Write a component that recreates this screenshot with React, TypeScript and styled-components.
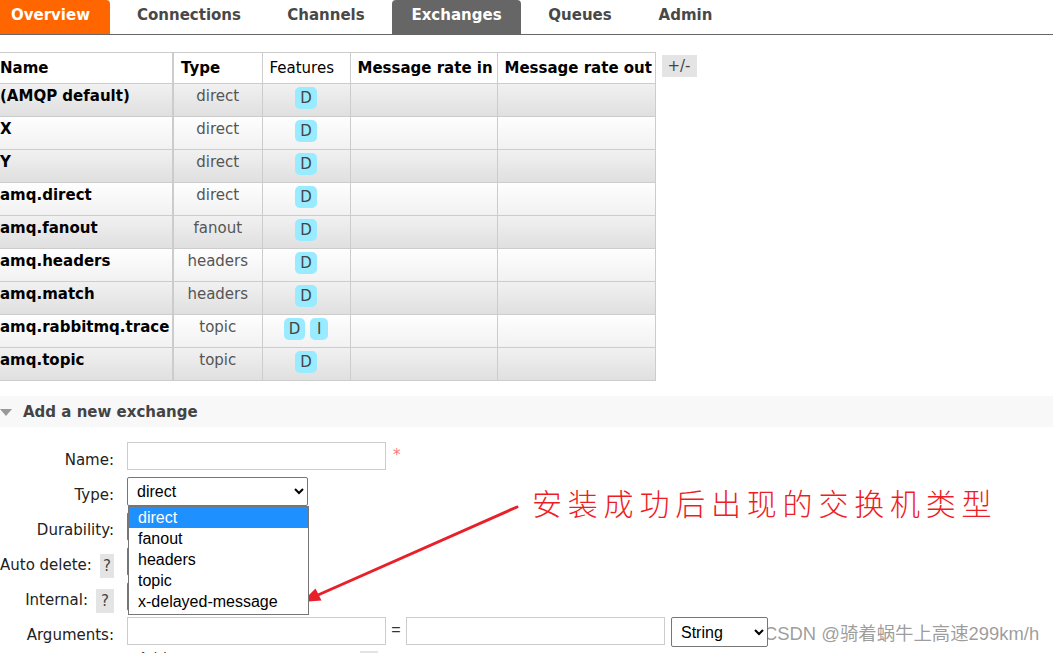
import React from "react";
import styled, { createGlobalStyle } from "styled-components";

const GlobalStyle = createGlobalStyle`
  html, body {
    margin: 0;
    padding: 0;
    background: #fff;
  }
  body {
    font-family: "DejaVu Sans", Verdana, sans-serif;
    font-size: 15px;
    color: #444;
    overflow: hidden;
  }
`;

interface IExchange {
  name: string;
  type: string;
  features: string[];
}

const exchanges: IExchange[] = [
  { name: "(AMQP default)", type: "direct", features: ["D"] },
  { name: "X", type: "direct", features: ["D"] },
  { name: "Y", type: "direct", features: ["D"] },
  { name: "amq.direct", type: "direct", features: ["D"] },
  { name: "amq.fanout", type: "fanout", features: ["D"] },
  { name: "amq.headers", type: "headers", features: ["D"] },
  { name: "amq.match", type: "headers", features: ["D"] },
  { name: "amq.rabbitmq.trace", type: "topic", features: ["D", "I"] },
  { name: "amq.topic", type: "topic", features: ["D"] },
];

const tabs = [
  { label: "Overview", width: 110, bg: "#f60" },
  { label: "Connections", width: 142 },
  { label: "Channels", width: 116 },
  { label: "Exchanges", width: 129, bg: "#666" },
  { label: "Queues", width: 102 },
  { label: "Admin", width: 93 },
];

const typeOptions = ["direct", "fanout", "headers", "topic", "x-delayed-message"];

const App: React.FC = () => {
  return (
    <Page>
      <GlobalStyle />
      <Nav>
        {tabs.map((t, i) => (
          <Tab key={t.label} $w={t.width} $bg={t.bg} $first={i === 0}>
            {t.label}
          </Tab>
        ))}
      </Nav>

      <TableArea>
        <Table>
          <colgroup>
            <col style={{ width: 173 }} />
            <col style={{ width: 89 }} />
            <col style={{ width: 88 }} />
            <col style={{ width: 147 }} />
            <col style={{ width: 158 }} />
          </colgroup>
          <thead>
            <HeadRow>
              <Th $first>Name</Th>
              <Th>Type</Th>
              <Th $normal>Features</Th>
              <Th>Message rate in</Th>
              <Th>Message rate out</Th>
            </HeadRow>
          </thead>
          <tbody>
            {exchanges.map((x, i) => (
              <Row key={x.name} $alt={i % 2 === 0}>
                <NameCell>{x.name}</NameCell>
                <TypeCell>{x.type}</TypeCell>
                <FeatureCell>
                  {x.features.map(f => (
                    <Badge key={f}>{f}</Badge>
                  ))}
                </FeatureCell>
                <Td />
                <Td />
              </Row>
            ))}
          </tbody>
        </Table>
        <ToggleButton>+/-</ToggleButton>
      </TableArea>

      <SectionHeader>
        <Triangle />
        Add a new exchange
      </SectionHeader>

      <Form>
        <FormRow>
          <Label>Name:</Label>
          <Field>
            <TextInput $w={259} />
            <Required>*</Required>
          </Field>
        </FormRow>
        <FormRow $top>
          <Label>Type:</Label>
          <Field>
            <SelectWrap>
              <Select $w={181} $h={29} defaultValue="direct">
                {typeOptions.map(o => (
                  <option key={o}>{o}</option>
                ))}
              </Select>
              <Popup>
                {typeOptions.map((o, i) => (
                  <PopupOption key={o} $selected={i === 0}>
                    {o}
                  </PopupOption>
                ))}
              </Popup>
            </SelectWrap>
          </Field>
        </FormRow>
        <FormRow>
          <Label>Durability:</Label>
          <Field>
            <Select $w={110} $h={29} defaultValue="Durable">
              <option>Durable</option>
              <option>Transient</option>
            </Select>
          </Field>
        </FormRow>
        <FormRow>
          <Label>
            Auto delete:<Help>?</Help>
          </Label>
          <Field>
            <Select $w={70} $h={29} defaultValue="No">
              <option>No</option>
              <option>Yes</option>
            </Select>
          </Field>
        </FormRow>
        <FormRow>
          <Label>
            Internal:<Help>?</Help>
          </Label>
          <Field>
            <Select $w={70} $h={29} defaultValue="No">
              <option>No</option>
              <option>Yes</option>
            </Select>
          </Field>
        </FormRow>
        <FormRow>
          <Label>Arguments:</Label>
          <Field>
            <TextInput $w={259} />
            <Equals>=</Equals>
            <TextInput $w={259} />
            <Select $w={97} $h={30} $ml={6} defaultValue="String">
              <option>String</option>
              <option>Number</option>
              <option>Boolean</option>
              <option>List</option>
            </Select>
          </Field>
        </FormRow>
        <FormRow>
          <span />
          <AddLine>
            Add<Help $inline>?</Help>
          </AddLine>
        </FormRow>
      </Form>

      <Annotation>安装成功后出现的交换机类型</Annotation>
      <ArrowLayer width="1053" height="653" viewBox="0 0 1053 653">
        <line x1="517" y1="507" x2="318" y2="595" stroke="#e8202a" strokeWidth="3" strokeLinecap="round" />
        <polygon points="302,602 321.5,600.5 315.5,588.5" fill="#e8202a" />
      </ArrowLayer>
      <Watermark>CSDN @骑着蜗牛上高速299km/h</Watermark>
    </Page>
  );
};

const Page = styled.div`
  position: relative;
  width: 1053px;
  height: 653px;
  overflow: hidden;
`;

const Nav = styled.nav`
  display: flex;
  gap: 8px;
  height: 34px;
  border-bottom: 1px solid #666;
`;

const Tab = styled.div<{ $w: number; $bg?: string; $first?: boolean }>`
  box-sizing: border-box;
  flex: none;
  width: ${p => p.$w}px;
  height: 34px;
  line-height: 30px;
  text-align: center;
  font-weight: bold;
  font-size: 15px;
  color: ${p => (p.$bg ? "#fff" : "#484848")};
  background: ${p => p.$bg || "transparent"};
  border-radius: ${p => (p.$first ? "0 4px 0 0" : "4px 4px 0 0")};
  padding-right: ${p => (p.$first ? 9 : 0)}px;
`;

const TableArea = styled.div`
  display: flex;
  align-items: flex-start;
  margin-top: 17px;
`;

const Table = styled.table`
  border-collapse: collapse;
  table-layout: fixed;
  width: 655px;
  font-size: 15px;
`;

const HeadRow = styled.tr`
  height: 31px;
  background: #fff;
`;

const Th = styled.th<{ $first?: boolean; $normal?: boolean }>`
  text-align: left;
  padding: 0 ${p => (p.$first ? "0" : "7px")};
  font-weight: ${p => (p.$normal ? "normal" : "bold")};
  color: #000;
  white-space: nowrap;
  border: 1px solid #ccc;
  ${p => (p.$first ? "border-left: none; border-right: 2px solid #ccc;" : "")}
`;

const Row = styled.tr<{ $alt?: boolean }>`
  height: 33px;
  background: ${p =>
    p.$alt
      ? "linear-gradient(to bottom, #f1f1f1, #dfdfdf)"
      : "linear-gradient(to bottom, #fefefe, #f1f1f1)"};
`;

const Td = styled.td`
  border: 1px solid #ccc;
  vertical-align: top;
  padding: 2px 8px 0;
  line-height: 20px;
  white-space: nowrap;
`;

const NameCell = styled(Td)`
  border-left: none;
  border-right: 2px solid #ccc;
  padding-left: 0;
  font-weight: bold;
  color: #000;
`;

const TypeCell = styled(Td)`
  text-align: center;
  color: #555;
`;

const FeatureCell = styled(Td)`
  text-align: center;
  padding-top: 3px;
`;

const Badge = styled.span`
  display: inline-block;
  box-sizing: border-box;
  min-width: 18px;
  height: 22px;
  line-height: 22px;
  padding: 0 5px;
  margin: 0 2.5px;
  border-radius: 5px;
  background: #99ebff;
  color: #444;
  text-align: center;
  vertical-align: top;
`;

const ToggleButton = styled.div`
  margin: 3px 0 0 6px;
  width: 35px;
  height: 22px;
  line-height: 22px;
  text-align: center;
  background: #e4e4e4;
  color: #444;
`;

const SectionHeader = styled.div`
  display: flex;
  align-items: center;
  gap: 11px;
  margin-top: 15px;
  height: 31px;
  background: #f8f8f8;
  font-weight: bold;
  color: #444;
`;

const Triangle = styled.span`
  width: 0;
  height: 0;
  border-left: 6px solid transparent;
  border-right: 6px solid transparent;
  border-top: 7px solid #999;
  margin-top: 1px;
`;

const Form = styled.div`
  display: flex;
  flex-direction: column;
  margin-top: 12px;
`;

const FormRow = styled.div<{ $top?: boolean }>`
  position: relative;
  z-index: ${p => (p.$top ? 2 : 1)};
  display: grid;
  grid-template-columns: 114px 1fr;
  column-gap: 13px;
  height: 35px;
`;

const Label = styled.div`
  display: flex;
  justify-content: flex-end;
  align-items: flex-start;
  gap: 8px;
  padding-top: 12px;
  line-height: 18px;
  color: #222;
  white-space: nowrap;
`;

const Help = styled.span<{ $inline?: boolean }>`
  display: inline-block;
  width: 18px;
  height: 24px;
  line-height: 24px;
  margin-top: ${p => (p.$inline ? 2 : -2)}px;
  text-align: center;
  background: #e4e4e4;
  color: #444;
`;

const Field = styled.div`
  display: flex;
  align-items: flex-start;
  padding-top: 3px;
`;

const TextInput = styled.input<{ $w: number }>`
  box-sizing: border-box;
  width: ${p => p.$w}px;
  height: 28px;
  border: 1px solid #ccc;
  padding: 0 4px;
  outline: none;
`;

const Required = styled.span`
  margin: 4px 0 0 7px;
  color: #f77;
  font-size: 15px;
`;

const Equals = styled.span`
  width: 20px;
  text-align: center;
  line-height: 26px;
  font-family: "Liberation Sans", Arial, sans-serif;
  font-size: 16px;
  color: #333;
`;

const SelectWrap = styled.div`
  position: relative;
`;

const Select = styled.select<{ $w: number; $h: number; $ml?: number }>`
  box-sizing: border-box;
  width: ${p => p.$w}px;
  height: ${p => p.$h}px;
  margin-left: ${p => p.$ml || 0}px;
  border: 1px solid #767676;
  border-radius: 2px;
  background: #fff;
  padding: 0 5px;
  font-family: "Liberation Sans", Arial, sans-serif;
  font-size: 16px;
  color: #000;
`;

const Popup = styled.div`
  position: absolute;
  top: 29px;
  left: 1px;
  width: 181px;
  box-sizing: border-box;
  border: 1px solid #767676;
  background: #fff;
  padding-bottom: 2px;
  font-family: "Liberation Sans", Arial, sans-serif;
  font-size: 16px;
`;

const PopupOption = styled.div<{ $selected?: boolean }>`
  height: 21px;
  line-height: 21px;
  padding-left: 9px;
  color: ${p => (p.$selected ? "#fff" : "#000")};
  background: ${p => (p.$selected ? "#1e90ff" : "transparent")};
`;

const AddLine = styled.div`
  display: flex;
  align-items: flex-start;
  gap: 193px;
  padding-left: 11px;
  line-height: 20px;
  color: #444;
`;

const Annotation = styled.div`
  position: absolute;
  left: 532px;
  top: 482px;
  font-family: "Noto Sans CJK SC", sans-serif;
  font-weight: 300;
  font-size: 30px;
  letter-spacing: 5.8px;
  line-height: 40px;
  color: #ee1c24;
  white-space: nowrap;
`;

const ArrowLayer = styled.svg`
  position: absolute;
  left: 0;
  top: 0;
  pointer-events: none;
`;

const Watermark = styled.div`
  position: absolute;
  left: 764px;
  top: 622px;
  font-family: "Liberation Sans", "Noto Sans CJK SC", sans-serif;
  font-size: 18.4px;
  line-height: 24px;
  color: rgba(140, 140, 140, 0.85);
  text-shadow: 0 0 2px #fff;
  white-space: nowrap;
`;

export default App;
